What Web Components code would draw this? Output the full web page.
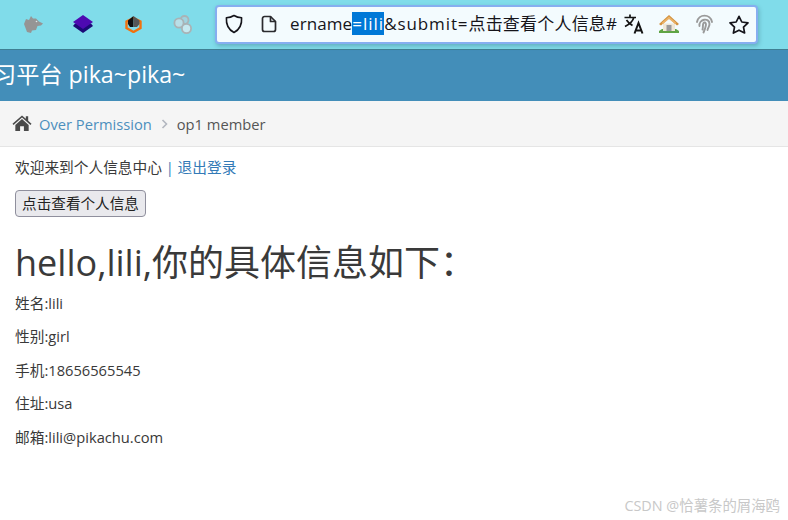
<!DOCTYPE html>
<html lang="zh"><head><meta charset="utf-8">
<style>
html,body{margin:0;padding:0;background:#fff;height:100%;overflow:hidden}
body{font-family:"Open Sans","Noto Sans CJK SC",sans-serif;color:#393939;font-size:14.7px}
</style></head><body>
<browser-bar></browser-bar>
<site-header>习平台 pika~pika~</site-header>
<bread-crumbs></bread-crumbs>
<member-panel></member-panel>
<water-mark>CSDN @恰薯条的屑海鸥</water-mark>
<script>
function def(name,html){
  customElements.define(name,class extends HTMLElement{
    constructor(){super();this.attachShadow({mode:'open'}).innerHTML=html;}
  });
}
def('browser-bar',`<style>
:host{display:flex;align-items:center;box-sizing:border-box;height:50px;background:#80dcea;border-bottom:1px solid #3f7f93;padding:0 30px 1px 24px}
.ext{display:flex;align-items:center;width:191px;flex:none}
.ext svg{flex:none}
.url{flex:1;display:flex;align-items:center;box-sizing:border-box;height:39px;background:#f3fbfe;border:2px solid #86aef0;border-radius:4px;box-shadow:1px 2px 4px rgba(40,90,110,.35);padding:0 7px 0 7px}
.url svg{flex:none}
.text{font:17px/23px "Open Sans","Noto Sans CJK SC",sans-serif;color:#15141a;margin:0 0 2px 13px;white-space:nowrap;width:328px;letter-spacing:.1px}
.sel{background:#0078d7;color:#fff;letter-spacing:1px}
.sp{letter-spacing:.9px}
.cj{letter-spacing:.2px}
.right{display:flex;align-items:center;margin-left:6px}
</style>
<div class="ext">
<svg width="19" height="18" viewBox="0 0 19 18"><path d="M0 9 2 4 5 5 7 1 9 3.500 12 3.500 15 6.500 19 8.500 17 10.500 13.500 11 12 15 8 15.500 7 18 3 17 1.500 13Z" fill="#959595"/><circle cx="12.500" cy="6.500" r=".8" fill="#dfe9ea"/></svg>
<svg style="margin-left:30px" width="20" height="18" viewBox="0 0 20 18"><path d="M10 18 20 11 18 8.500H2L0 11Z" fill="#1b0a78"/><path d="M10 0 20 7 10 14 0 7Z" fill="#4d0ab2"/></svg>
<svg style="margin-left:32px" width="17" height="17" viewBox="0 0 17 17"><path d="M8.500 2 15.500 5.500V12L8.500 16 1.500 12V5.500Z" fill="none" stroke="#f2710c" stroke-width="2.400"/><path d="M3 4.500 8.500 0V11H5L3 8Z" fill="#111"/><path d="M8.500 0 14.500 4.500V8L12 11H8.500Z" fill="#565656"/></svg>
<svg style="margin-left:31px" width="19" height="19" viewBox="0 0 19 19"><circle cx="11.500" cy="5" r="4" fill="#9fd3df" stroke="#a9b3b6" stroke-width="1.800"/><circle cx="6" cy="8" r="4.600" fill="#b9dfe8" stroke="#a9b3b6" stroke-width="1.800"/><circle cx="13.500" cy="13.500" r="4.600" fill="#c6e9f0" stroke="#a9b3b6" stroke-width="1.800"/></svg>
</div>
<div class="url">
<svg width="20" height="20" viewBox="0 0 20 20" fill="none" stroke="#15141a" stroke-width="1.600"><path d="M10 1.500C12.500 3 15 3.600 17.600 3.800 18 10 16 15.500 10 18.500 4 15.500 2 10 2.400 3.800 5 3.600 7.500 3 10 1.500Z" stroke-linejoin="round"/></svg>
<svg style="margin-left:17px" width="16" height="18" viewBox="0 0 16 18" fill="none" stroke="#2a2a2e" stroke-width="1.700" stroke-linejoin="round"><path d="M3.500 1.500H9.500L14.500 6.500V14.500A2 2 0 0 1 12.500 16.500H3.500A2 2 0 0 1 1.500 14.500V3.500A2 2 0 0 1 3.500 1.500Z"/><path d="M9.500 1.500V6.500H14.500"/></svg>
<div class="text">ername<span class="sel">=lili</span><span class="sp">&amp;submit=</span><span class="cj">点击查看个人信息#</span></div>
<div class="right">
<svg width="20" height="20" viewBox="0 0 20 20" fill="none" stroke="#141414" stroke-width="1.700"><path d="M.5 3.500H12M6 .5V3.500M9.800 3.500C8.800 7.500 5 10.500 1 12.500M2.500 6C4 8.500 6 10 8.500 11.500"/><path d="M10.500 19.500 14.500 9 18.500 19.500M11.800 16.500H17.200" stroke-width="2"/></svg>
<svg style="margin-left:15px" width="20" height="18" viewBox="0 0 20 18"><path d="M0 18V16L3 14H17L20 16V18Z" fill="#5fa445"/><path d="M4 8.500H16V16H4Z" fill="#efe7d6"/><path d="M0 9 10 0 20 9 18 10.500 10 3.500 2 10.500Z" fill="#d2923f"/><path d="M2.500 8 10 1.500 17.500 8 16 9 10 4 4 9Z" fill="#ecb368"/><path d="M7.500 10H12.500V16H7.500Z" fill="#9a9a9a"/></svg>
<svg style="margin-left:17px" width="17" height="20" viewBox="0 0 17 20" fill="none" stroke="#9a9a9a" stroke-width="1.900" stroke-linecap="round"><path d="M1 8C2.500 -.5 14.500 -.5 16 8"/><path d="M3.500 12C2.500 5 13.500 3 13.500 10 13.500 12.500 12 13.500 11.500 16"/><path d="M6.500 15.500C7.500 13 6 8.500 8.500 8.500 11 8.500 10 13 7.500 18.500"/></svg>
<svg style="margin-left:16px" width="20" height="19" viewBox="0 0 20 19" fill="none" stroke="#15141a" stroke-width="1.700" stroke-linejoin="round"><path d="M10 1.300 12.800 7 19 7.800 14.500 12.200 15.600 18 10 15.200 4.400 18 5.500 12.200 1 7.800 7.200 7Z"/></svg>
</div></div>`);
def('site-header',`<style>
:host{display:block;box-sizing:border-box;height:51px;background:#438eb9;color:#fff;font:23.200px/49px "Open Sans","Noto Sans CJK SC",sans-serif;overflow:hidden;white-space:nowrap}
span{display:block;margin-left:-7px}
</style><span><slot></slot></span>`);
def('bread-crumbs',`<style>
:host{display:flex;align-items:center;box-sizing:border-box;height:46px;background:#f5f5f5;border-bottom:1px solid #e5e5e5;padding:1px 0 0 12px;font-size:14.700px;color:#555}
a{color:#4c8fbd;margin-left:7px}
.s{margin:0 9px;flex:none}
</style>
<svg width="20" height="18" viewBox="0 0 21 18" style="flex:none;margin-top:-3px"><path fill="#4a4a4a" d="M10.500 1 14.500 4.500V2H17V6.700L20.500 9.800 19.400 11 10.500 3.200 1.600 11 .5 9.800ZM10.500 4.800 3.500 11V17.500H8.500V12.500H12.500V17.500H17.500V11Z"/></svg>
<a>Over Permission</a>
<svg class="s" width="7" height="10" viewBox="0 0 7 10" fill="none" stroke="#b2b6bf" stroke-width="1.600"><path d="M1.500 1 5.500 5 1.500 9"/></svg>
<span>op1 member</span>`);
def('member-panel',`<style>
:host{display:block;padding:9px 15px 0;color:#393939;font-size:14.700px}
.line{line-height:22px}
a{color:#337ab7}
.bar{color:#337ab7}
button{display:block;box-sizing:border-box;margin:12px 0 0;height:27px;width:131px;padding:0 0 2px;font:14.600px "Open Sans","Noto Sans CJK SC",sans-serif;color:#222;background:#e9e9ed;border:1px solid #8f8f9d;border-radius:4px}
h1{font-weight:400;font-size:36px;line-height:40px;margin:26px 0 0;color:#3a3a3a}
p{margin:0 0 13.500px;line-height:20px}
.ps{margin-top:9.500px}
</style>
<div class="line">欢迎来到个人信息中心 <span class="bar">|</span> <a>退出登录</a></div>
<button>点击查看个人信息</button>
<h1>hello,lili,你的具体信息如下：</h1>
<div class="ps">
<p>姓名:lili</p><p>性别:girl</p><p>手机:18656565545</p><p>住址:usa</p><p>邮箱:lili@pikachu.com</p>
</div>`);
def('water-mark',`<style>
:host{position:absolute;right:8px;bottom:4px;font:14.400px/20px "Open Sans","Noto Sans CJK SC",sans-serif;color:#c8c8c8}
</style><slot></slot>`);
</script>
</body></html>
